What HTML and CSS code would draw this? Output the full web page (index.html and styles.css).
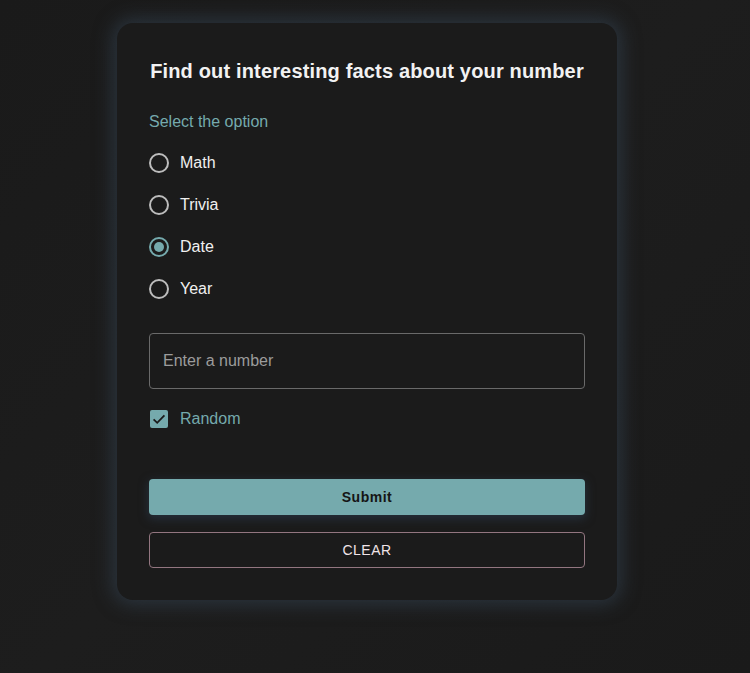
FILE: index.html
```html
<!DOCTYPE html>
<html lang="en">
<head>
<meta charset="utf-8">
<title>Number facts</title>
<link rel="stylesheet" href="styles.css">
</head>
<body>
<div class="page">
  <form class="card">
    <h1 class="title">Find out interesting facts about your number</h1>
    <div class="legend">Select the option</div>
    <div class="options">
      <label class="option">
        <span class="radio"></span>
        <span class="opt-label">Math</span>
      </label>
      <label class="option">
        <span class="radio"></span>
        <span class="opt-label">Trivia</span>
      </label>
      <label class="option">
        <span class="radio checked"><span class="dot"></span></span>
        <span class="opt-label">Date</span>
      </label>
      <label class="option">
        <span class="radio"></span>
        <span class="opt-label">Year</span>
      </label>
    </div>
    <div class="field">Enter a number</div>
    <label class="check-row">
      <span class="checkbox">
        <svg width="16" height="16" viewBox="0 0 16 16"><path d="M2.6 8.3 L6.2 11.8 L13.4 4.4" fill="none" stroke="#1b1b1b" stroke-width="1.8"/></svg>
      </span>
      <span class="check-label">Random</span>
    </label>
    <div class="actions">
      <button type="button" class="btn submit">Submit</button>
      <button type="button" class="btn clear">CLEAR</button>
    </div>
  </form>
</div>
</body>
</html>
```
FILE: styles.css
```css
* { box-sizing: border-box; }
html, body {
  margin: 0;
  padding: 0;
}
body {
  background: linear-gradient(135deg, #1a1a1a 0%, #1d1d1d 50%, #1a1a1a 100%);
  min-height: 673px;
  font-family: "Liberation Sans", Arial, sans-serif;
  color: #f0f0f0;
}
.page {
  width: 734px;
  display: flex;
  justify-content: center;
  padding-top: 23px;
}
.card {
  width: 500px;
  background: #1b1b1b;
  border-radius: 16px;
  padding: 32px 32px 32px;
  box-shadow: 0 0 18px 5px rgba(52, 66, 82, 0.6);
  display: flex;
  flex-direction: column;
}
.title {
  margin: 0;
  font-size: 20px;
  line-height: 32px;
  font-weight: 700;
  letter-spacing: 0.16px;
  text-align: center;
  color: #f2f2f2;
}
.legend {
  margin-top: 23px;
  font-size: 16px;
  line-height: 24px;
  color: #75aaad;
}
.options {
  margin-top: 8px;
  display: flex;
  flex-direction: column;
}
.option {
  height: 42px;
  display: flex;
  align-items: center;
  gap: 11px;
}
.radio {
  width: 20px;
  height: 20px;
  border: 2px solid #bdbdbd;
  border-radius: 50%;
  display: flex;
  align-items: center;
  justify-content: center;
}
.radio.checked {
  border-color: #75aaad;
}
.dot {
  width: 10px;
  height: 10px;
  border-radius: 50%;
  background: #75aaad;
}
.opt-label {
  font-size: 16px;
  line-height: 24px;
  color: #f0f0f0;
}
.field {
  margin-top: 23px;
  height: 56px;
  border: 1px solid #6a6a6a;
  border-radius: 4px;
  padding: 0 13px;
  display: flex;
  align-items: center;
  font-size: 16px;
  color: #9c9c9c;
}
.check-row {
  margin-top: 9px;
  height: 42px;
  display: flex;
  align-items: center;
  gap: 12px;
  padding-left: 1px;
}
.checkbox {
  width: 18px;
  height: 18px;
  border-radius: 2px;
  background: #75aaad;
  display: flex;
  align-items: center;
  justify-content: center;
}
.check-label {
  font-size: 16px;
  line-height: 24px;
  color: #75aaad;
}
.actions {
  margin-top: 39px;
  display: flex;
  flex-direction: column;
  gap: 17px;
}
.btn {
  height: 36px;
  width: 100%;
  border-radius: 4px;
  font-family: "Liberation Sans", Arial, sans-serif;
  font-size: 14px;
  letter-spacing: 0.5px;
  cursor: pointer;
}
.submit {
  background: #75aaad;
  border: none;
  color: #151515;
  font-weight: 700;
  box-shadow: 0 3px 10px 1px rgba(40, 52, 66, 0.8);
}
.clear {
  background: transparent;
  border: 1px solid #937680;
  color: #f1e4e8;
  font-weight: 400;
}
```
